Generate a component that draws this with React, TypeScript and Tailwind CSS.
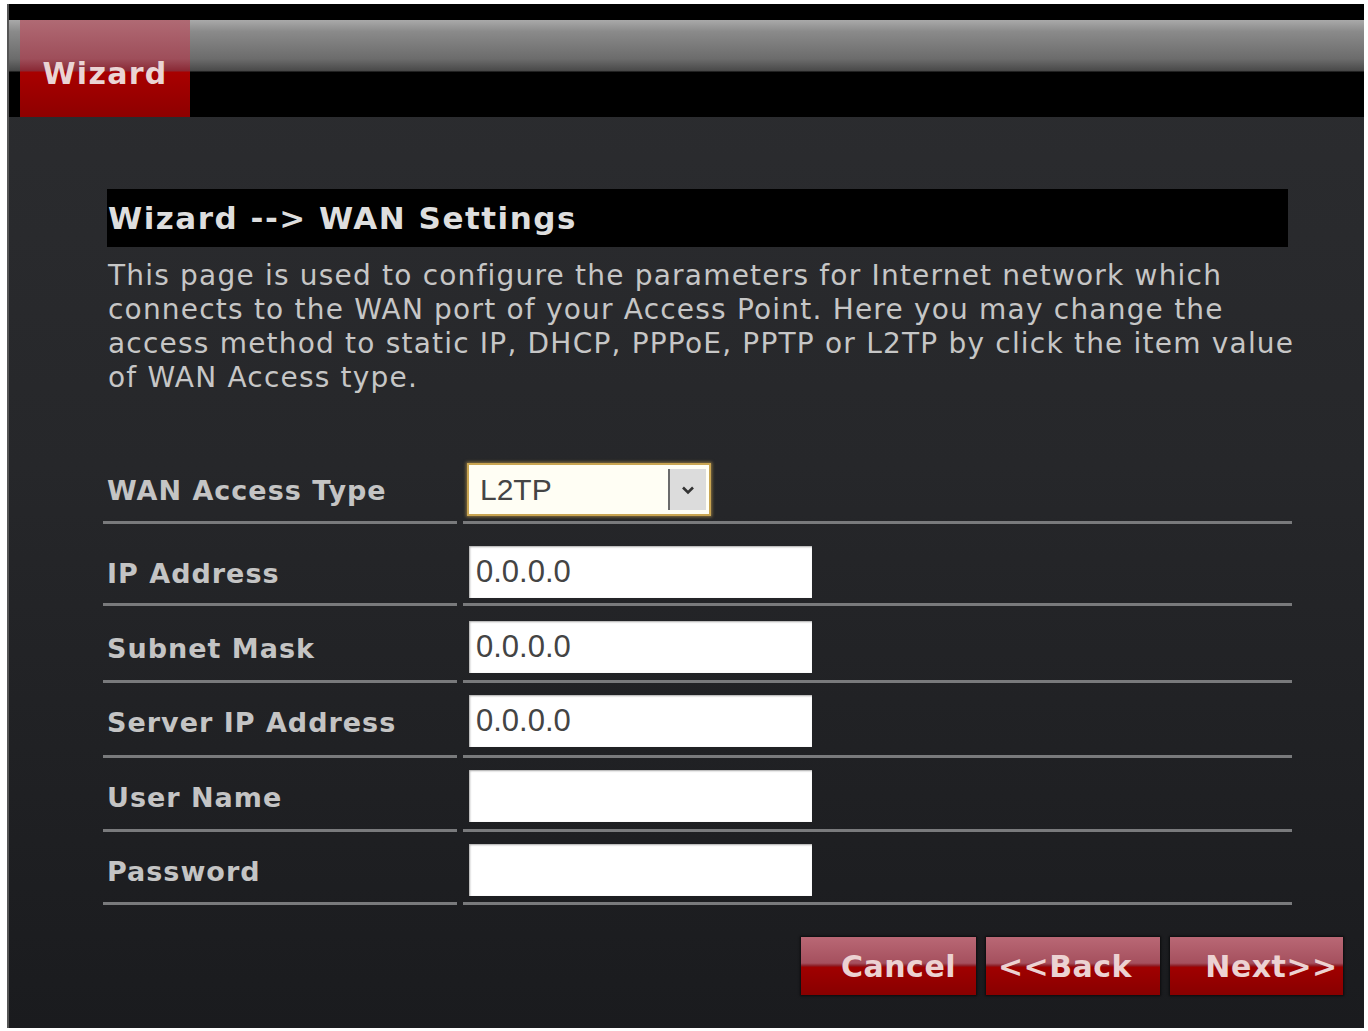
import React from "react";

const labelFont = { fontFamily: '"DejaVu Sans", Verdana, sans-serif' };
const fieldFont = { fontFamily: '"Liberation Sans", Arial, sans-serif' };

type Row = {
  label: string;
  kind: "select" | "input";
  value?: string;
  pad: string;
};

const rows: Row[] = [
  { label: "WAN Access Type", kind: "select", value: "L2TP", pad: "pt-[12px] pb-[5px]" },
  { label: "IP Address", kind: "input", value: "0.0.0.0", pad: "pt-[22px] pb-[5px]" },
  { label: "Subnet Mask", kind: "input", value: "0.0.0.0", pad: "pt-[15px] pb-[7px]" },
  { label: "Server IP Address", kind: "input", value: "0.0.0.0", pad: "pt-[12px] pb-[8px]" },
  { label: "User Name", kind: "input", value: "", pad: "pt-[12px] pb-[7px]" },
  { label: "Password", kind: "input", value: "", pad: "pt-[12px] pb-[6px]" },
];

function AccessSelect({ value }: { value: string }) {
  return (
    <div className="ml-[4px] flex h-[53px] w-[244px] items-stretch border-[2px] border-[#c9a552] bg-[#fffef4] shadow-[0_0_3px_1px_rgba(201,165,82,0.6)]">
      <div className="flex flex-1 items-center pl-[11px] text-[30px] text-[#454545]" style={fieldFont}>
        {value}
      </div>
      <div className="my-[4px] mr-[3px] flex w-[38px] items-center justify-center border-l-[2px] border-[#6b6b6b] bg-[#dcdcdc]">
        <svg width="16" height="12" viewBox="0 0 16 12">
          <path d="M3 3.5 L8 8.5 L13 3.5" fill="none" stroke="#333" strokeWidth="2.6" />
        </svg>
      </div>
    </div>
  );
}

function TextField({ value }: { value: string }) {
  return (
    <div
      className="ml-[6px] flex h-[52px] w-[343px] items-center bg-white pl-[7px] text-[31px] text-[#444] shadow-[inset_1px_1px_2px_rgba(0,0,0,0.35)]"
      style={fieldFont}
    >
      {value}
    </div>
  );
}

function RedButton({ children, className }: { children: React.ReactNode; className: string }) {
  return (
    <div
      className={`flex h-[58px] items-center justify-center bg-[linear-gradient(to_bottom,#b96875_0%,#a5505e_45%,#8c1a22_50%,#a00000_52%,#880000_100%)] text-[30px] font-bold tracking-[0.5px] text-[#ecd2d2] shadow-[0_0_2px_1px_rgba(0,0,0,0.6)] ${className}`}
      style={labelFont}
    >
      {children}
    </div>
  );
}

export default function App() {
  return (
    <div className="h-[1031px] w-[1368px] bg-white pb-[3px] pl-[7px] pr-[4px] pt-[4px]" style={labelFont}>
      <div className="flex h-full flex-col border-l-[2px] border-[#555] bg-[linear-gradient(to_bottom,#2c2d30_0%,#26272a_45%,#1a1b1e_100%)]">
        {/* top strip */}
        <div className="h-[16px] bg-black" />

        {/* navigation bar with the active tab */}
        <div className="flex h-[97px] bg-[linear-gradient(to_bottom,#a9a9a9_0%,#8a8a8a_12%,#6c6c6c_40%,#4a4a4a_52%,#000_54%,#000_100%)]">
          <div className="ml-[11px] flex w-[170px] items-center justify-center bg-[linear-gradient(to_bottom,#b06a74_0%,#9e4e5a_40%,#8a2a36_52%,#a80000_54%,#8e0000_100%)] pt-[10px] text-[30px] font-bold tracking-[1.3px] text-[#ead4d4]">
            Wizard
          </div>
        </div>

        {/* page body */}
        <div className="flex flex-1 flex-col pl-[98px] pr-[76px] pt-[72px]">
          <div className="flex h-[58px] items-center bg-black pl-[1px] text-[31px] font-bold tracking-[1.5px] text-[#dedede]">
            Wizard --&gt; WAN Settings
          </div>

          <div className="mt-[12px] pl-[1px] text-[28px] leading-[34px] tracking-[1.2px] text-[#c6c6c6]">
            <div className="whitespace-nowrap">This page is used to configure the parameters for Internet network which</div>
            <div className="whitespace-nowrap">connects to the WAN port of your Access Point. Here you may change the</div>
            <div className="whitespace-nowrap">access method to static IP, DHCP, PPPoE, PPTP or L2TP by click the item value</div>
            <div className="whitespace-nowrap">of WAN Access type.</div>
          </div>

          {/* settings table */}
          <div className="-ml-[4px] mr-[-4px] mt-[56px] flex flex-col">
            {rows.map((r) => (
              <div key={r.label} className="grid grid-cols-[354px_1fr] gap-x-[6px]">
                <div
                  className={`flex items-center border-b-[3px] border-[#797a7c] pl-[4px] text-[27px] font-bold tracking-[1px] text-[#c4c4c4] ${r.pad}`}
                >
                  <span className="flex h-[52px] items-center pt-[4px]">{r.label}</span>
                </div>
                <div className={`flex items-center border-b-[3px] border-[#797a7c] ${r.pad}`}>
                  {r.kind === "select" ? <AccessSelect value={r.value ?? ""} /> : <TextField value={r.value ?? ""} />}
                </div>
              </div>
            ))}
          </div>

          <div className="-mr-[55px] mt-[32px] flex justify-end gap-[10px]">
            <RedButton className="w-[175px] pl-[20px]">Cancel</RedButton>
            <RedButton className="w-[174px] pr-[16px]">&lt;&lt;Back</RedButton>
            <RedButton className="w-[173px] pl-[30px]">Next&gt;&gt;</RedButton>
          </div>
        </div>
      </div>
    </div>
  );
}
